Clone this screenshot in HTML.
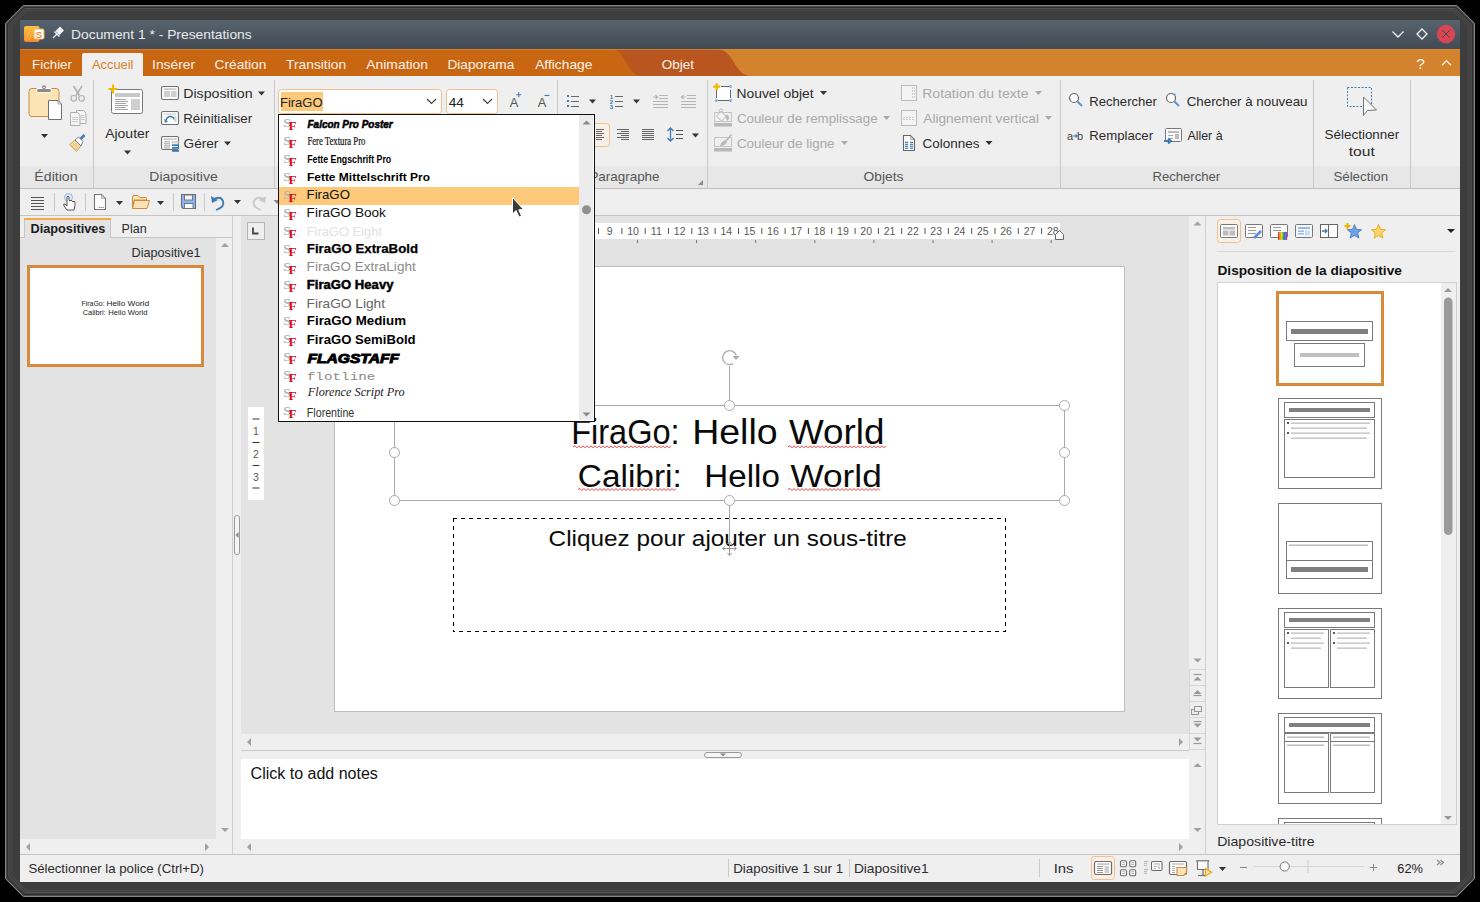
<!DOCTYPE html><html><head><meta charset="utf-8"><title>Presentations</title><style>html,body{margin:0;padding:0;background:#000;width:1480px;height:902px;overflow:hidden}text{white-space:pre}</style></head><body><svg width="1480" height="902" viewBox="0 0 1480 902" style="display:block">
<defs><linearGradient id="ai" x1="0" y1="0" x2="0" y2="1"><stop offset="0" stop-color="#fcc43c"/><stop offset="1" stop-color="#f6892c"/></linearGradient><linearGradient id="tb" x1="0" y1="0" x2="0" y2="1"><stop offset="0" stop-color="#56636e"/><stop offset="1" stop-color="#434b54"/></linearGradient></defs>
<rect x="0" y="0" width="1480" height="902" fill="#000" />
<path d="M23,5 L1457,5 L1475,23 L1475,879 L1457,897 L23,897 L5,879 L5,23 Z" fill="#3d3d3d" />
<path d="M23.5,5.5 L1456.5,5.5 L1474.5,23.5 L1474.5,878.5 L1456.5,896.5 L23.5,896.5 L5.5,878.5 L5.5,23.5 Z" fill="none" stroke="#858585" stroke-width="1" />
<path d="M24.0,6.5 L1456.0,6.5 L1473.5,24.0 L1473.5,878.0 L1456.0,895.5 L24.0,895.5 L6.5,878.0 L6.5,24.0 Z" fill="none" stroke="#4c4c4c" stroke-width="1" />
<path d="M24.5,7.5 L1455.5,7.5 L1472.5,24.5 L1472.5,877.5 L1455.5,894.5 L24.5,894.5 L7.5,877.5 L7.5,24.5 Z" fill="none" stroke="#303030" stroke-width="1" />
<path d="M25,8.5 L1455,8.5 L1471,24.5 L1471,876.5 L1455,892.5 L25,892.5 L9,876.5 L9,24.5 Z" fill="none" stroke="#525252" stroke-width="1" />
<path d="M26.5,10.5 L1453.5,10.5 L1468.5,25.5 L1468.5,875.5 L1453.5,890.5 L26.5,890.5 L11.5,875.5 L11.5,25.5 Z" fill="none" stroke="#454545" stroke-width="2" />
<rect x="20" y="20" width="1440" height="862" fill="#efefef" />
<rect x="20" y="20" width="1440" height="29" fill="url(#tb)" />
<path d="M24,28 Q24,26 26,26 L37.5,26 Q39.5,26 39.5,28 L39.5,40 Q39.5,42 37.5,42 L26,42 Q24,42 24,40 Z" fill="url(#ai)" />
<path d="M26,40 L31,28 M29,40 L34,28" fill="none" stroke="#fdd070" stroke-width="0.8" opacity="0.6"/>
<rect x="34" y="29" width="10" height="10" fill="#fff" stroke="#f8b25a" stroke-width="1" rx="1.5" />
<text x="39" y="37.5" font-family="Liberation Sans" font-size="9.5" fill="#f0862a" font-weight="bold" font-style="normal" text-anchor="middle" >S</text>
<path d="M53,38 L57.5,33.5" fill="none" stroke="#f0f0f0" stroke-width="1.3" />
<path d="M55.5,31 L60,26.5 L64,30.5 L59.5,35 Z" fill="#f0f0f0" />
<path d="M54.5,31.5 L59.5,36.5" fill="none" stroke="#f0f0f0" stroke-width="1.5" />
<text x="71.09" y="39" font-family="Liberation Sans" font-size="13" fill="#e8eaec" font-weight="normal" font-style="normal" text-anchor="start" textLength="180.62" lengthAdjust="spacingAndGlyphs" >Document 1 * - Presentations</text>
<path d="M1392.5,31.5 L1398,37 L1403.5,31.5" fill="none" stroke="#f4f4f4" stroke-width="1.3" />
<path d="M1422,29 L1427,34 L1422,39 L1417,34 Z" fill="none" stroke="#f4f4f4" stroke-width="1.3" />
<circle cx="1446" cy="34" r="9.2" fill="#da4453"/>
<path d="M1442,30 L1450,38 M1450,30 L1442,38" fill="none" stroke="#3b4650" stroke-width="0.9" />
<rect x="20" y="49" width="1440" height="27" fill="#d3822e" />
<path d="M20,49 L611,49 C626,49 626,76 641,76 L20,76 Z" fill="#c96612" />
<path d="M611,49 L717,49 C734,49 734,76 751,76 L641,76 C626,76 626,49 611,49 Z" fill="#b9561f" />
<line x1="20" y1="49.5" x2="1460" y2="49.5" stroke="#db8a36" stroke-width="1" opacity="0.7"/>
<path d="M82,76 L82,55 Q82,53 84,53 L141,53 Q143,53 143,55 L143,76 Z" fill="#efefef" />
<text x="32.14" y="69" font-family="Liberation Sans" font-size="13" fill="#fbf3ea" font-weight="normal" font-style="normal" text-anchor="start" textLength="39.77" lengthAdjust="spacingAndGlyphs" >Fichier</text>
<text x="92.0" y="69" font-family="Liberation Sans" font-size="13" fill="#d8842c" font-weight="normal" font-style="normal" text-anchor="start" textLength="41.48" lengthAdjust="spacingAndGlyphs" >Accueil</text>
<text x="152.06" y="69" font-family="Liberation Sans" font-size="13" fill="#fbf3ea" font-weight="normal" font-style="normal" text-anchor="start" textLength="42.98" lengthAdjust="spacingAndGlyphs" >Insérer</text>
<text x="214.62" y="69" font-family="Liberation Sans" font-size="13" fill="#fbf3ea" font-weight="normal" font-style="normal" text-anchor="start" textLength="51.67" lengthAdjust="spacingAndGlyphs" >Création</text>
<text x="286.12" y="69" font-family="Liberation Sans" font-size="13" fill="#fbf3ea" font-weight="normal" font-style="normal" text-anchor="start" textLength="59.95" lengthAdjust="spacingAndGlyphs" >Transition</text>
<text x="366.3" y="69" font-family="Liberation Sans" font-size="13" fill="#fbf3ea" font-weight="normal" font-style="normal" text-anchor="start" textLength="61.73" lengthAdjust="spacingAndGlyphs" >Animation</text>
<text x="447.4" y="69" font-family="Liberation Sans" font-size="13" fill="#fbf3ea" font-weight="normal" font-style="normal" text-anchor="start" textLength="67.01" lengthAdjust="spacingAndGlyphs" >Diaporama</text>
<text x="535.2" y="69" font-family="Liberation Sans" font-size="13" fill="#fbf3ea" font-weight="normal" font-style="normal" text-anchor="start" textLength="57.17" lengthAdjust="spacingAndGlyphs" >Affichage</text>
<text x="661.79" y="69" font-family="Liberation Sans" font-size="13" fill="#fbf3ea" font-weight="normal" font-style="normal" text-anchor="start" textLength="32.35" lengthAdjust="spacingAndGlyphs" >Objet</text>
<text x="1420.5" y="69" font-family="Liberation Sans" font-size="15.5" fill="#fbf3ea" font-weight="normal" font-style="normal" text-anchor="middle" >?</text>
<path d="M1442,65.3 L1446.5,60.6 L1451,65.3" fill="none" stroke="#fbf3ea" stroke-width="1.3" />
<rect x="20" y="76" width="1440" height="112" fill="#efefef" />
<rect x="20" y="166" width="1440" height="22" fill="#e7e7e7" />
<line x1="20" y1="188.5" x2="1460" y2="188.5" stroke="#bdbdbd" stroke-width="1" />
<line x1="93.5" y1="80" x2="93.5" y2="188" stroke="#c9c9c9" stroke-width="1" />
<line x1="274.5" y1="80" x2="274.5" y2="188" stroke="#c9c9c9" stroke-width="1" />
<line x1="557.5" y1="80" x2="557.5" y2="188" stroke="#c9c9c9" stroke-width="1" />
<line x1="707.5" y1="80" x2="707.5" y2="188" stroke="#c9c9c9" stroke-width="1" />
<line x1="1060.5" y1="80" x2="1060.5" y2="188" stroke="#c9c9c9" stroke-width="1" />
<line x1="1313.5" y1="80" x2="1313.5" y2="188" stroke="#c9c9c9" stroke-width="1" />
<line x1="1410.5" y1="80" x2="1410.5" y2="188" stroke="#c9c9c9" stroke-width="1" />
<text x="34.37" y="180.6" font-family="Liberation Sans" font-size="13" fill="#555555" font-weight="normal" font-style="normal" text-anchor="start" textLength="43.19" lengthAdjust="spacingAndGlyphs" >Édition</text>
<text x="149.28" y="180.6" font-family="Liberation Sans" font-size="13" fill="#555555" font-weight="normal" font-style="normal" text-anchor="start" textLength="68.50" lengthAdjust="spacingAndGlyphs" >Diapositive</text>
<text x="589.43" y="180.5" font-family="Liberation Sans" font-size="13" fill="#555555" font-weight="normal" font-style="normal" text-anchor="start" textLength="70.13" lengthAdjust="spacingAndGlyphs" >Paragraphe</text>
<text x="863.58" y="180.6" font-family="Liberation Sans" font-size="13" fill="#555555" font-weight="normal" font-style="normal" text-anchor="start" textLength="39.91" lengthAdjust="spacingAndGlyphs" >Objets</text>
<text x="1152.45" y="180.6" font-family="Liberation Sans" font-size="13" fill="#555555" font-weight="normal" font-style="normal" text-anchor="start" textLength="67.80" lengthAdjust="spacingAndGlyphs" >Rechercher</text>
<text x="1333.4" y="180.6" font-family="Liberation Sans" font-size="13" fill="#555555" font-weight="normal" font-style="normal" text-anchor="start" textLength="54.75" lengthAdjust="spacingAndGlyphs" >Sélection</text>
<path d="M703,180 L703,185 L698,185 Z" fill="#888" />
<path d="M32,88.5 L56,88.5 Q59,88.5 59,91.5 L59,113.5 Q59,116.5 56,116.5 L32,116.5 Q29,116.5 29,113.5 L29,91.5 Q29,88.5 32,88.5 Z" fill="#fde4b6" stroke="#cf8a45" stroke-width="1" />
<rect x="36" y="88" width="16" height="4.5" fill="#fff" rx="2" />
<rect x="37" y="89" width="14" height="3" fill="#8a8a8a" rx="1.5" />
<circle cx="44" cy="87.3" r="2" fill="#8a8a8a"/>
<circle cx="44" cy="87.5" r="0.8" fill="#fff"/>
<path d="M48.5,100.5 L58,100.5 L61.5,104 L61.5,119.5 L48.5,119.5 Z" fill="#fff" stroke="#707070" stroke-width="1" />
<path d="M58,100.5 L58,104 L61.5,104" fill="none" stroke="#909090" stroke-width="0.8" />
<path d="M41.0,134.0 L48.0,134.0 L44.5,138.0 Z" fill="#333" />
<path d="M73.5,86 L79.5,95.5 M82,86 L76,95.5" fill="none" stroke="#b0b0b0" stroke-width="1.6" />
<circle cx="73.8" cy="98.3" r="2.8" fill="none" stroke="#b0b0b0" stroke-width="1.2"/>
<circle cx="81.6" cy="98.3" r="2.8" fill="none" stroke="#b0b0b0" stroke-width="1.2"/>
<path d="M76.5,110.5 L83.5,110.5 L86,113 L86,123.5 L76.5,123.5 Z" fill="#f4f4f4" stroke="#b0b0b0" stroke-width="1" />
<path d="M70.5,112.5 L77.5,112.5 L80,115 L80,125.5 L70.5,125.5 Z" fill="#f4f4f4" stroke="#b0b0b0" stroke-width="1" />
<line x1="72" y1="117.5" x2="78" y2="117.5" stroke="#c0c0c0" stroke-width="0.8" />
<line x1="81" y1="115.5" x2="84.5" y2="115.5" stroke="#c0c0c0" stroke-width="0.8" />
<line x1="72" y1="119.5" x2="78" y2="119.5" stroke="#c0c0c0" stroke-width="0.8" />
<line x1="81" y1="117.5" x2="84.5" y2="117.5" stroke="#c0c0c0" stroke-width="0.8" />
<line x1="72" y1="121.5" x2="78" y2="121.5" stroke="#c0c0c0" stroke-width="0.8" />
<line x1="81" y1="119.5" x2="84.5" y2="119.5" stroke="#c0c0c0" stroke-width="0.8" />
<path d="M69.5,144.5 L76.5,151.5 L81,146 L75,140 Z" fill="#f6d89c" stroke="#c99a55" stroke-width="0.8" />
<path d="M71.5,146 L77,150 M73,143.5 L78.5,148" fill="none" stroke="#d8b070" stroke-width="0.6" />
<path d="M75,140 L78.5,137 L83,141.5 L81,146 Z" fill="#fff" stroke="#666" stroke-width="0.8" />
<path d="M80.5,139 L84.5,135" fill="none" stroke="#3d7cb5" stroke-width="2.6" />
<path d="M111.5,91.5 Q111.5,89.5 113.5,89.5 L140.5,89.5 Q142.5,89.5 142.5,91.5 L142.5,111.5 Q142.5,113.5 140.5,113.5 L113.5,113.5 Q111.5,113.5 111.5,111.5 Z" fill="#fff" stroke="#777" stroke-width="1" />
<rect x="115" y="93" width="25" height="4" fill="#c8c8c8" />
<line x1="115" y1="99.5" x2="126" y2="99.5" stroke="#999" stroke-width="0.9" />
<line x1="115" y1="101.5" x2="128" y2="101.5" stroke="#999" stroke-width="0.9" />
<line x1="115" y1="103.5" x2="126" y2="103.5" stroke="#999" stroke-width="0.9" />
<line x1="115" y1="105.5" x2="128" y2="105.5" stroke="#999" stroke-width="0.9" />
<line x1="115" y1="107.5" x2="126" y2="107.5" stroke="#999" stroke-width="0.9" />
<line x1="115" y1="109.5" x2="128" y2="109.5" stroke="#999" stroke-width="0.9" />
<rect x="131" y="99" width="9" height="11" fill="#cfcfcf" />
<path d="M113,84.5 L113,93.5 M108.5,89 L117.5,89" fill="none" stroke="#f5b800" stroke-width="2" />
<text x="105.2" y="138.4" font-family="Liberation Sans" font-size="13" fill="#2b2b2b" font-weight="normal" font-style="normal" text-anchor="start" textLength="44.26" lengthAdjust="spacingAndGlyphs" >Ajouter</text>
<path d="M124.0,150.5 L131.0,150.5 L127.5,154.5 Z" fill="#333" />
<rect x="161.5" y="86.5" width="17" height="13" fill="#fafafa" stroke="#707070" stroke-width="1.1" rx="1.5" />
<rect x="161.5" y="111.5" width="17" height="13" fill="#fafafa" stroke="#707070" stroke-width="1.1" rx="1.5" />
<rect x="161.5" y="136.5" width="17" height="13" fill="#fafafa" stroke="#707070" stroke-width="1.1" rx="1.5" />
<rect x="164" y="88.3" width="12.5" height="1.6" fill="#c8c8c8" />
<rect x="164" y="91" width="6" height="6" fill="#cfcfcf" />
<rect x="171" y="91" width="5.5" height="6" fill="#cfcfcf" />
<rect x="164" y="113.3" width="12.5" height="1.6" fill="#dcdcdc" />
<rect x="174" y="116" width="2.5" height="6" fill="#dcdcdc" />
<line x1="164" y1="122" x2="167" y2="122" stroke="#c8c8c8" stroke-width="0.8" />
<path d="M166.2,120.2 Q167,116.5 170.5,116.5 Q173.5,116.5 174,119.5" fill="none" stroke="#3d7cb5" stroke-width="1.3" />
<path d="M164.2,118.8 L168.2,121.6 L165,122.6 Z" fill="#3d7cb5" />
<rect x="164" y="138.3" width="12.5" height="1.6" fill="#c8c8c8" />
<line x1="164" y1="141.8" x2="170" y2="141.8" stroke="#999" stroke-width="0.9" />
<line x1="164" y1="143.8" x2="170" y2="143.8" stroke="#999" stroke-width="0.9" />
<line x1="164" y1="145.8" x2="170" y2="145.8" stroke="#999" stroke-width="0.9" />
<line x1="164" y1="147.8" x2="170" y2="147.8" stroke="#999" stroke-width="0.9" />
<rect x="172" y="144.3" width="7" height="1.8" fill="#3d7cb5" />
<rect x="172" y="147" width="7" height="1.8" fill="#3d7cb5" />
<rect x="172" y="150" width="7" height="1.8" fill="#3d7cb5" />
<rect x="171.5" y="141" width="7" height="2.5" fill="#d6d6d6" />
<text x="183.17" y="98.3" font-family="Liberation Sans" font-size="13" fill="#2b2b2b" font-weight="normal" font-style="normal" text-anchor="start" textLength="69.37" lengthAdjust="spacingAndGlyphs" >Disposition</text>
<path d="M258.0,91.5 L265.0,91.5 L261.5,95.5 Z" fill="#333" />
<text x="183.23" y="123" font-family="Liberation Sans" font-size="13" fill="#2b2b2b" font-weight="normal" font-style="normal" text-anchor="start" textLength="69.02" lengthAdjust="spacingAndGlyphs" >Réinitialiser</text>
<text x="183.62" y="148" font-family="Liberation Sans" font-size="13" fill="#2b2b2b" font-weight="normal" font-style="normal" text-anchor="start" textLength="34.80" lengthAdjust="spacingAndGlyphs" >Gérer</text>
<path d="M224.0,141.5 L231.0,141.5 L227.5,145.5 Z" fill="#333" />
<rect x="278.5" y="89.5" width="163" height="24" fill="#fff" stroke="#f2c08c" stroke-width="1" rx="3" />
<rect x="281" y="92" width="42" height="19" fill="#fdc97a" />
<text x="279.96" y="107" font-family="Liberation Sans" font-size="13" fill="#222" font-weight="normal" font-style="normal" text-anchor="start" textLength="42.66" lengthAdjust="spacingAndGlyphs" >FiraGO</text>
<path d="M427,99 L431.5,103.5 L436,99" fill="none" stroke="#444" stroke-width="1.2" />
<rect x="446.5" y="89.5" width="51" height="24" fill="#fff" stroke="#f2c08c" stroke-width="1" rx="3" />
<text x="448.73" y="107" font-family="Liberation Sans" font-size="13" fill="#222" font-weight="normal" font-style="normal" text-anchor="start" textLength="15.14" lengthAdjust="spacingAndGlyphs" >44</text>
<path d="M483,99 L487.5,103.5 L492,99" fill="none" stroke="#444" stroke-width="1.2" />
<text x="514" y="106.6" font-family="Liberation Sans" font-size="12.8" fill="#555" font-weight="normal" font-style="normal" text-anchor="middle" >A</text>
<path d="M518.7,92.2 L518.7,97.2 M516.2,94.7 L521.2,94.7" fill="none" stroke="#3d7cb5" stroke-width="1.1" />
<text x="542" y="106.6" font-family="Liberation Sans" font-size="12.8" fill="#555" font-weight="normal" font-style="normal" text-anchor="middle" >A</text>
<line x1="544.5" y1="95.5" x2="549.5" y2="95.5" stroke="#3d7cb5" stroke-width="1.1" />
<rect x="567" y="95" width="2" height="2" fill="#3d7cb5" />
<line x1="571" y1="96.5" x2="579" y2="96.5" stroke="#666" stroke-width="1" />
<rect x="567" y="100" width="2" height="2" fill="#3d7cb5" />
<line x1="571" y1="101.5" x2="579" y2="101.5" stroke="#666" stroke-width="1" />
<rect x="567" y="105" width="2" height="2" fill="#3d7cb5" />
<line x1="571" y1="106.5" x2="579" y2="106.5" stroke="#666" stroke-width="1" />
<path d="M589.0,99.5 L596.0,99.5 L592.5,103.5 Z" fill="#333" />
<text x="611.5" y="98.5" font-family="Liberation Sans" font-size="6" fill="#3d7cb5" font-weight="bold" font-style="normal" text-anchor="middle" >1</text>
<line x1="615" y1="96.5" x2="623" y2="96.5" stroke="#666" stroke-width="1" />
<text x="611.5" y="103.5" font-family="Liberation Sans" font-size="6" fill="#3d7cb5" font-weight="bold" font-style="normal" text-anchor="middle" >2</text>
<line x1="615" y1="101.5" x2="623" y2="101.5" stroke="#666" stroke-width="1" />
<text x="611.5" y="108.5" font-family="Liberation Sans" font-size="6" fill="#3d7cb5" font-weight="bold" font-style="normal" text-anchor="middle" >3</text>
<line x1="615" y1="106.5" x2="623" y2="106.5" stroke="#666" stroke-width="1" />
<path d="M633.0,99.5 L640.0,99.5 L636.5,103.5 Z" fill="#333" />
<line x1="659" y1="95.5" x2="668" y2="95.5" stroke="#b5b5b5" stroke-width="1" />
<line x1="659" y1="98.5" x2="668" y2="98.5" stroke="#b5b5b5" stroke-width="1" />
<line x1="653" y1="101.5" x2="668" y2="101.5" stroke="#b5b5b5" stroke-width="1" />
<line x1="653" y1="104.5" x2="668" y2="104.5" stroke="#b5b5b5" stroke-width="1" />
<line x1="653" y1="107.5" x2="668" y2="107.5" stroke="#b5b5b5" stroke-width="1" />
<path d="M653,97 L657,97 M655.5,95 L657.5,97 L655.5,99" fill="none" stroke="#b5b5b5" stroke-width="1.2" />
<line x1="687" y1="95.5" x2="696" y2="95.5" stroke="#b5b5b5" stroke-width="1" />
<line x1="687" y1="98.5" x2="696" y2="98.5" stroke="#b5b5b5" stroke-width="1" />
<line x1="681" y1="101.5" x2="696" y2="101.5" stroke="#b5b5b5" stroke-width="1" />
<line x1="681" y1="104.5" x2="696" y2="104.5" stroke="#b5b5b5" stroke-width="1" />
<line x1="681" y1="107.5" x2="696" y2="107.5" stroke="#b5b5b5" stroke-width="1" />
<path d="M685.5,97 L681.5,97 M683.5,95 L681.5,97 L683.5,99" fill="none" stroke="#b5b5b5" stroke-width="1.2" />
<rect x="590.5" y="123.5" width="19" height="23" fill="#f8efe6" stroke="#f2c08c" stroke-width="1" rx="3" />
<line x1="596" y1="129.5" x2="604" y2="129.5" stroke="#666" stroke-width="1" />
<line x1="617" y1="129.5" x2="629" y2="129.5" stroke="#666" stroke-width="1" />
<line x1="642" y1="129.5" x2="654" y2="129.5" stroke="#666" stroke-width="1" />
<line x1="596" y1="131.5" x2="602" y2="131.5" stroke="#666" stroke-width="1" />
<line x1="621" y1="131.5" x2="629" y2="131.5" stroke="#666" stroke-width="1" />
<line x1="642" y1="131.5" x2="654" y2="131.5" stroke="#666" stroke-width="1" />
<line x1="596" y1="133.5" x2="604" y2="133.5" stroke="#666" stroke-width="1" />
<line x1="617" y1="133.5" x2="629" y2="133.5" stroke="#666" stroke-width="1" />
<line x1="642" y1="133.5" x2="654" y2="133.5" stroke="#666" stroke-width="1" />
<line x1="596" y1="135.5" x2="602" y2="135.5" stroke="#666" stroke-width="1" />
<line x1="621" y1="135.5" x2="629" y2="135.5" stroke="#666" stroke-width="1" />
<line x1="642" y1="135.5" x2="654" y2="135.5" stroke="#666" stroke-width="1" />
<line x1="596" y1="137.5" x2="604" y2="137.5" stroke="#666" stroke-width="1" />
<line x1="617" y1="137.5" x2="629" y2="137.5" stroke="#666" stroke-width="1" />
<line x1="642" y1="137.5" x2="654" y2="137.5" stroke="#666" stroke-width="1" />
<line x1="596" y1="139.5" x2="602" y2="139.5" stroke="#666" stroke-width="1" />
<line x1="621" y1="139.5" x2="629" y2="139.5" stroke="#666" stroke-width="1" />
<line x1="642" y1="139.5" x2="654" y2="139.5" stroke="#666" stroke-width="1" />
<path d="M670.5,128 L670.5,141" fill="none" stroke="#3d7cb5" stroke-width="1.3" />
<path d="M667.5,131 L670.5,128 L673.5,131 M667.5,138 L670.5,141 L673.5,138" fill="none" stroke="#3d7cb5" stroke-width="1.3" />
<line x1="676" y1="130.5" x2="683" y2="130.5" stroke="#555" stroke-width="1" />
<line x1="676" y1="134.5" x2="683" y2="134.5" stroke="#555" stroke-width="1" />
<line x1="676" y1="138.5" x2="683" y2="138.5" stroke="#555" stroke-width="1" />
<path d="M692.0,133.5 L699.0,133.5 L695.5,137.5 Z" fill="#333" />
<rect x="716" y="86" width="14.5" height="14.5" fill="#fff" />
<path d="M721,86.5 L729,86.5 M730.5,90 L730.5,98 M729,100.5 L718,100.5 M716.5,98 L716.5,90" fill="none" stroke="#666" stroke-width="1" />
<rect x="729.3" y="85.3" width="2.4" height="2.4" fill="#6b9cf0" />
<rect x="715.3" y="99.3" width="2.4" height="2.4" fill="#6b9cf0" />
<rect x="729.3" y="99.3" width="2.4" height="2.4" fill="#6b9cf0" />
<path d="M716.7,83.2 L716.7,90.2 M713.2,86.7 L720.2,86.7" fill="none" stroke="#f5b800" stroke-width="2.2" />
<text x="736.49" y="97.6" font-family="Liberation Sans" font-size="13" fill="#2b2b2b" font-weight="normal" font-style="normal" text-anchor="start" textLength="77.14" lengthAdjust="spacingAndGlyphs" >Nouvel objet</text>
<path d="M820.0,91.0 L827.0,91.0 L823.5,95.0 Z" fill="#333" />
<rect x="714.5" y="112.5" width="17" height="9" fill="none" stroke="#c4c4c4" stroke-width="1" />
<path d="M716.5,116 L721,111.5 L726,116.5 L721.5,121 Z" fill="#f4f4f4" stroke="#b8b8b8" stroke-width="1" />
<circle cx="721" cy="110.5" r="1.6" fill="none" stroke="#b8b8b8" stroke-width="0.9"/>
<path d="M725,115 Q729,114 729,119 L727,121 Z" fill="#b8b8b8" />
<rect x="714" y="123" width="18" height="3.5" fill="#b8b8b8" />
<text x="736.93" y="122.5" font-family="Liberation Sans" font-size="13" fill="#a9a9a9" font-weight="normal" font-style="normal" text-anchor="start" textLength="140.62" lengthAdjust="spacingAndGlyphs" >Couleur de remplissage</text>
<path d="M883.0,116.0 L890.0,116.0 L886.5,120.0 Z" fill="#aaa" />
<rect x="714.5" y="137.5" width="17" height="9" fill="none" stroke="#c4c4c4" stroke-width="1" />
<path d="M720,146 Q721,142 725,140 L727,142 Q725,146 720,146 Z" fill="#b8b8b8" />
<path d="M726,141 L731.5,134.5" fill="none" stroke="#b8b8b8" stroke-width="1.6" />
<rect x="714" y="148" width="18" height="3.5" fill="#b8b8b8" />
<text x="736.93" y="147.5" font-family="Liberation Sans" font-size="13" fill="#a9a9a9" font-weight="normal" font-style="normal" text-anchor="start" textLength="97.65" lengthAdjust="spacingAndGlyphs" >Couleur de ligne</text>
<path d="M841.0,141.0 L848.0,141.0 L844.5,145.0 Z" fill="#aaa" />
<rect x="901.5" y="85.5" width="15" height="15" fill="#f4f4f4" stroke="#bbb" stroke-width="1" />
<line x1="912.5" y1="87" x2="912.5" y2="99" stroke="#ccc" stroke-width="1" stroke-dasharray="2,1"/>
<line x1="914.5" y1="87" x2="914.5" y2="99" stroke="#ccc" stroke-width="1" stroke-dasharray="2,1"/>
<text x="922.18" y="97.6" font-family="Liberation Sans" font-size="13" fill="#a9a9a9" font-weight="normal" font-style="normal" text-anchor="start" textLength="106.30" lengthAdjust="spacingAndGlyphs" >Rotation du texte</text>
<path d="M1035.0,91.0 L1042.0,91.0 L1038.5,95.0 Z" fill="#aaa" />
<rect x="901.5" y="110.5" width="15" height="15" fill="#f4f4f4" stroke="#bbb" stroke-width="1" />
<line x1="903" y1="117.5" x2="915" y2="117.5" stroke="#ccc" stroke-width="1" stroke-dasharray="2,1"/>
<line x1="903" y1="119.5" x2="915" y2="119.5" stroke="#ccc" stroke-width="1" stroke-dasharray="2,1"/>
<text x="923.3" y="122.5" font-family="Liberation Sans" font-size="13" fill="#a9a9a9" font-weight="normal" font-style="normal" text-anchor="start" textLength="115.64" lengthAdjust="spacingAndGlyphs" >Alignement vertical</text>
<path d="M1045.0,116.0 L1052.0,116.0 L1048.5,120.0 Z" fill="#aaa" />
<path d="M903.5,135.5 L910.5,135.5 L914.5,139.5 L914.5,150.5 L903.5,150.5 Z" fill="#fff" stroke="#666" stroke-width="1.1" />
<path d="M910.5,136 L910.5,139.5 L914,139.5 Z" fill="#ddd" stroke="#888" stroke-width="0.6" />
<rect x="905" y="141.7" width="3.2" height="1.2" fill="#3d7cb5" />
<rect x="910" y="141.7" width="3.2" height="1.2" fill="#3d7cb5" />
<rect x="905" y="143.7" width="3.2" height="1.2" fill="#3d7cb5" />
<rect x="910" y="143.7" width="3.2" height="1.2" fill="#3d7cb5" />
<rect x="905" y="145.7" width="3.2" height="1.2" fill="#3d7cb5" />
<rect x="910" y="145.7" width="3.2" height="1.2" fill="#3d7cb5" />
<rect x="905" y="147.7" width="3.2" height="1.2" fill="#3d7cb5" />
<rect x="910" y="147.7" width="3.2" height="1.2" fill="#3d7cb5" />
<text x="922.63" y="147.5" font-family="Liberation Sans" font-size="13" fill="#2b2b2b" font-weight="normal" font-style="normal" text-anchor="start" textLength="56.85" lengthAdjust="spacingAndGlyphs" >Colonnes</text>
<path d="M985.5,141.0 L992.5,141.0 L989,145.0 Z" fill="#333" />
<circle cx="1074" cy="98" r="4.5" fill="#fff" stroke="#666" stroke-width="1.2"/>
<path d="M1077.5,101.5 L1082,106" fill="none" stroke="#5b8ee0" stroke-width="2" />
<circle cx="1171" cy="98" r="4.5" fill="#fff" stroke="#666" stroke-width="1.2"/>
<path d="M1174.5,101.5 L1179,106" fill="none" stroke="#5b8ee0" stroke-width="2" />
<path d="M1173,93.5 L1176,94 L1174.5,96.5 Z" fill="#5b8ee0" />
<text x="1089.35" y="105.8" font-family="Liberation Sans" font-size="13" fill="#2b2b2b" font-weight="normal" font-style="normal" text-anchor="start" textLength="67.60" lengthAdjust="spacingAndGlyphs" >Rechercher</text>
<text x="1186.73" y="105.8" font-family="Liberation Sans" font-size="13" fill="#2b2b2b" font-weight="normal" font-style="normal" text-anchor="start" textLength="120.76" lengthAdjust="spacingAndGlyphs" >Chercher à nouveau</text>
<text x="1067" y="140" font-family="Liberation Sans" font-size="11" fill="#444" font-weight="normal" font-style="normal" text-anchor="start" >a</text>
<text x="1077" y="140" font-family="Liberation Sans" font-size="11" fill="#444" font-weight="normal" font-style="normal" text-anchor="start" >b</text>
<path d="M1073,136 L1077,136 M1075.5,134.5 L1077,136 L1075.5,137.5" fill="none" stroke="#3d7cb5" stroke-width="1.2" />
<text x="1089.35" y="140" font-family="Liberation Sans" font-size="13" fill="#2b2b2b" font-weight="normal" font-style="normal" text-anchor="start" textLength="63.72" lengthAdjust="spacingAndGlyphs" >Remplacer</text>
<rect x="1165.5" y="128.5" width="16" height="13" fill="#fafafa" stroke="#777" stroke-width="1" rx="1" />
<rect x="1168" y="131" width="11" height="2" fill="#bbb" />
<rect x="1175" y="134" width="4" height="5" fill="#bbb" />
<line x1="1168" y1="135.5" x2="1173" y2="135.5" stroke="#aaa" stroke-width="1" />
<line x1="1168" y1="138.5" x2="1173" y2="138.5" stroke="#aaa" stroke-width="1" />
<path d="M1164,141 L1170,141 M1168,138.5 L1171,141 L1168,143.5" fill="none" stroke="#3d7cb5" stroke-width="2" />
<text x="1187.4" y="140" font-family="Liberation Sans" font-size="13" fill="#2b2b2b" font-weight="normal" font-style="normal" text-anchor="start" textLength="35.20" lengthAdjust="spacingAndGlyphs" >Aller à</text>
<rect x="1347.5" y="87.5" width="24" height="19" fill="none" stroke="#3d7cb5" stroke-width="1" stroke-dasharray="2,1.5"/>
<path d="M1363.5,97 L1363.5,115.5 L1367.5,110.5 L1376.5,110 Z" fill="#f8f8f8" stroke="#777" stroke-width="1" />
<text x="1324.6" y="138.7" font-family="Liberation Sans" font-size="13" fill="#2b2b2b" font-weight="normal" font-style="normal" text-anchor="start" textLength="74.66" lengthAdjust="spacingAndGlyphs" >Sélectionner</text>
<text x="1348.77" y="156.4" font-family="Liberation Sans" font-size="13" fill="#2b2b2b" font-weight="normal" font-style="normal" text-anchor="start" textLength="26.06" lengthAdjust="spacingAndGlyphs" >tout</text>
<rect x="20" y="189" width="1440" height="26" fill="#efefef" />
<line x1="20" y1="215.5" x2="1460" y2="215.5" stroke="#c4c4c4" stroke-width="1" />
<line x1="31" y1="197.5" x2="44" y2="197.5" stroke="#555" stroke-width="1" />
<line x1="31" y1="200.5" x2="44" y2="200.5" stroke="#555" stroke-width="1" />
<line x1="31" y1="203.5" x2="44" y2="203.5" stroke="#555" stroke-width="1" />
<line x1="31" y1="206.5" x2="44" y2="206.5" stroke="#555" stroke-width="1" />
<line x1="31" y1="209.5" x2="44" y2="209.5" stroke="#555" stroke-width="1" />
<line x1="54.5" y1="193" x2="54.5" y2="211" stroke="#c9c9c9" stroke-width="1" />
<line x1="85.5" y1="193" x2="85.5" y2="211" stroke="#c9c9c9" stroke-width="1" />
<line x1="173.5" y1="193" x2="173.5" y2="211" stroke="#c9c9c9" stroke-width="1" />
<line x1="204.5" y1="193" x2="204.5" y2="211" stroke="#c9c9c9" stroke-width="1" />
<circle cx="68.5" cy="197.5" r="4" fill="#dbe7f7" stroke="#9ab8e8" stroke-width="1"/>
<path d="M67,197 L67,206 L65,204 Q63,203 64,206 L67,210 L74,210 L75,205 L75,202 Q74,200 73,202 L72,201 Q71,199 70,201 L69,200 L69,197 Q68,195 67,197 Z" fill="#fff" stroke="#444" stroke-width="0.9" />
<path d="M94.5,194.5 L101.5,194.5 L105.5,198.5 L105.5,209.5 L94.5,209.5 Z" fill="#fff" stroke="#777" stroke-width="1.1" />
<path d="M101.5,195 L101.5,198.5 L105,198.5 Z" fill="#ddd" stroke="#999" stroke-width="0.6" />
<rect x="98.7" y="207" width="1" height="1" fill="#666" />
<rect x="100.7" y="207" width="1" height="1" fill="#666" />
<rect x="102.7" y="207" width="1" height="1" fill="#666" />
<path d="M116.0,201.0 L123.0,201.0 L119.5,205.0 Z" fill="#333" />
<path d="M132.5,197 Q132.5,195.5 134,195.5 L138,195.5 L140,197.5 L146,197.5 Q146.5,197.5 146.5,198.5 L146.5,200 L134,200 L132.5,208.5 Z" fill="#fde4b6" stroke="#d08a40" stroke-width="1" />
<path d="M134.5,200.5 L149.5,200.5 L147,208.5 L132.5,208.5 Z" fill="#fde4b6" stroke="#d08a40" stroke-width="1" />
<path d="M157.0,201.0 L164.0,201.0 L160.5,205.0 Z" fill="#333" />
<path d="M181.5,194.5 L195.5,194.5 L195.5,208.5 L183,208.5 L181.5,207 Z" fill="#8ab4f8" stroke="#6f6f6f" stroke-width="1.1" />
<rect x="184.5" y="195" width="8" height="5" fill="#f2f6fc" stroke="#6f6f6f" stroke-width="0.9" />
<rect x="184.5" y="203.5" width="8.5" height="5" fill="#fff" stroke="#6f6f6f" stroke-width="0.9" />
<path d="M213,200 Q220,195 223,201 Q225,207 216,210" fill="none" stroke="#3d7cb5" stroke-width="1.8" />
<path d="M211,196 L212,203 L218,200 Z" fill="#3d7cb5" />
<path d="M234.0,200.0 L241.0,200.0 L237.5,204.0 Z" fill="#333" />
<path d="M264,200 Q257,195 254,201 Q252,207 261,210" fill="none" stroke="#c8c8c8" stroke-width="1.8" />
<path d="M266,196 L265,203 L259,200 Z" fill="#c8c8c8" />
<path d="M273.5,200.0 L280.5,200.0 L277,204.0 Z" fill="#888" />
<rect x="20" y="216" width="213" height="639" fill="#efefef" />
<rect x="20" y="238" width="196" height="601" fill="#e3e3e3" />
<rect x="24" y="218" width="87" height="21" fill="#e3e3e3" />
<line x1="24.5" y1="219" x2="24.5" y2="238" stroke="#c4c4c4" stroke-width="1" />
<line x1="110.5" y1="219" x2="110.5" y2="238" stroke="#c4c4c4" stroke-width="1" />
<rect x="24" y="218" width="87" height="2" fill="#f5a940" />
<line x1="20" y1="237.5" x2="24" y2="237.5" stroke="#c4c4c4" stroke-width="1" />
<line x1="111" y1="237.5" x2="232" y2="237.5" stroke="#c4c4c4" stroke-width="1" />
<text x="30.47" y="232.8" font-family="Liberation Sans" font-size="13" fill="#1a1a1a" font-weight="bold" font-style="normal" text-anchor="start" textLength="74.95" lengthAdjust="spacingAndGlyphs" >Diapositives</text>
<text x="121.6" y="232.8" font-family="Liberation Sans" font-size="13" fill="#2b2b2b" font-weight="normal" font-style="normal" text-anchor="start" textLength="25.14" lengthAdjust="spacingAndGlyphs" >Plan</text>
<rect x="216" y="239" width="16" height="600" fill="#efefef" />
<path d="M221.0,247.0 L229.0,247.0 L225,243.0 Z" fill="#a0a0a0" />
<path d="M221.0,828.0 L229.0,828.0 L225,832.0 Z" fill="#a0a0a0" />
<line x1="232.5" y1="216" x2="232.5" y2="855" stroke="#d0d0d0" stroke-width="1" />
<rect x="20" y="839" width="212" height="16" fill="#efefef" />
<path d="M30.0,843.0 L30.0,851.0 L26.0,847 Z" fill="#a0a0a0" />
<path d="M205.0,843.0 L205.0,851.0 L209.0,847 Z" fill="#a0a0a0" />
<text x="131.59" y="257" font-family="Liberation Sans" font-size="13" fill="#2b2b2b" font-weight="normal" font-style="normal" text-anchor="start" textLength="68.91" lengthAdjust="spacingAndGlyphs" >Diapositive1</text>
<rect x="28.5" y="266.5" width="174" height="99" fill="#fff" stroke="#d8893a" stroke-width="3" />
<text x="81.44" y="305.5" font-family="Liberation Sans" font-size="7.5" fill="#1a1a1a" font-weight="normal" font-style="normal" text-anchor="start" textLength="23.21" lengthAdjust="spacingAndGlyphs" >FiraGo:</text>
<text x="106.44" y="305.5" font-family="Liberation Sans" font-size="7.5" fill="#1a1a1a" font-weight="normal" font-style="normal" text-anchor="start" textLength="42.60" lengthAdjust="spacingAndGlyphs" >Hello World</text>
<text x="82.73" y="314.6" font-family="Liberation Sans" font-size="7.2" fill="#1a1a1a" font-weight="normal" font-style="normal" text-anchor="start" textLength="22.95" lengthAdjust="spacingAndGlyphs" >Calibri:</text>
<text x="108.29" y="314.6" font-family="Liberation Sans" font-size="7.2" fill="#1a1a1a" font-weight="normal" font-style="normal" text-anchor="start" textLength="39.20" lengthAdjust="spacingAndGlyphs" >Hello World</text>
<rect x="233" y="216" width="8" height="639" fill="#efefef" />
<rect x="234.5" y="515.5" width="5" height="39" fill="#f5f5f5" stroke="#999" stroke-width="1" rx="2.5" />
<path d="M238.5,532.0 L238.5,538.0 L235.5,535 Z" fill="#888" />
<rect x="241" y="216" width="948" height="518" fill="#e3e3e3" />
<rect x="247.5" y="222.5" width="17" height="17" fill="#efefef" stroke="#b5b5b5" stroke-width="1" />
<path d="M253,227.5 L253,233.5 L258.5,233.5" fill="none" stroke="#444" stroke-width="1.8" />
<rect x="395" y="223" width="665" height="16" fill="#fff" />
<text x="423.1" y="235" font-family="Liberation Sans" font-size="10.5" fill="#5a5a5a" font-weight="normal" font-style="normal" text-anchor="middle" >1</text>
<line x1="412.0" y1="228" x2="412.0" y2="234" stroke="#555" stroke-width="1" />
<text x="446.5" y="235" font-family="Liberation Sans" font-size="10.5" fill="#5a5a5a" font-weight="normal" font-style="normal" text-anchor="middle" >2</text>
<line x1="435.3" y1="228" x2="435.3" y2="234" stroke="#555" stroke-width="1" />
<text x="469.8" y="235" font-family="Liberation Sans" font-size="10.5" fill="#5a5a5a" font-weight="normal" font-style="normal" text-anchor="middle" >3</text>
<line x1="458.6" y1="228" x2="458.6" y2="234" stroke="#555" stroke-width="1" />
<text x="493.1" y="235" font-family="Liberation Sans" font-size="10.5" fill="#5a5a5a" font-weight="normal" font-style="normal" text-anchor="middle" >4</text>
<line x1="481.9" y1="228" x2="481.9" y2="234" stroke="#555" stroke-width="1" />
<text x="516.4" y="235" font-family="Liberation Sans" font-size="10.5" fill="#5a5a5a" font-weight="normal" font-style="normal" text-anchor="middle" >5</text>
<line x1="505.3" y1="228" x2="505.3" y2="234" stroke="#555" stroke-width="1" />
<text x="539.7" y="235" font-family="Liberation Sans" font-size="10.5" fill="#5a5a5a" font-weight="normal" font-style="normal" text-anchor="middle" >6</text>
<line x1="528.6" y1="228" x2="528.6" y2="234" stroke="#555" stroke-width="1" />
<text x="563.1" y="235" font-family="Liberation Sans" font-size="10.5" fill="#5a5a5a" font-weight="normal" font-style="normal" text-anchor="middle" >7</text>
<line x1="551.9" y1="228" x2="551.9" y2="234" stroke="#555" stroke-width="1" />
<text x="586.4" y="235" font-family="Liberation Sans" font-size="10.5" fill="#5a5a5a" font-weight="normal" font-style="normal" text-anchor="middle" >8</text>
<line x1="575.2" y1="228" x2="575.2" y2="234" stroke="#555" stroke-width="1" />
<text x="609.7" y="235" font-family="Liberation Sans" font-size="10.5" fill="#5a5a5a" font-weight="normal" font-style="normal" text-anchor="middle" >9</text>
<line x1="598.5" y1="228" x2="598.5" y2="234" stroke="#555" stroke-width="1" />
<text x="633.0" y="235" font-family="Liberation Sans" font-size="10.5" fill="#5a5a5a" font-weight="normal" font-style="normal" text-anchor="middle" >10</text>
<line x1="621.9" y1="228" x2="621.9" y2="234" stroke="#555" stroke-width="1" />
<text x="656.3" y="235" font-family="Liberation Sans" font-size="10.5" fill="#5a5a5a" font-weight="normal" font-style="normal" text-anchor="middle" >11</text>
<line x1="645.2" y1="228" x2="645.2" y2="234" stroke="#555" stroke-width="1" />
<text x="679.7" y="235" font-family="Liberation Sans" font-size="10.5" fill="#5a5a5a" font-weight="normal" font-style="normal" text-anchor="middle" >12</text>
<line x1="668.5" y1="228" x2="668.5" y2="234" stroke="#555" stroke-width="1" />
<text x="703.0" y="235" font-family="Liberation Sans" font-size="10.5" fill="#5a5a5a" font-weight="normal" font-style="normal" text-anchor="middle" >13</text>
<line x1="691.8" y1="228" x2="691.8" y2="234" stroke="#555" stroke-width="1" />
<text x="726.3" y="235" font-family="Liberation Sans" font-size="10.5" fill="#5a5a5a" font-weight="normal" font-style="normal" text-anchor="middle" >14</text>
<line x1="715.1" y1="228" x2="715.1" y2="234" stroke="#555" stroke-width="1" />
<text x="749.6" y="235" font-family="Liberation Sans" font-size="10.5" fill="#5a5a5a" font-weight="normal" font-style="normal" text-anchor="middle" >15</text>
<line x1="738.5" y1="228" x2="738.5" y2="234" stroke="#555" stroke-width="1" />
<text x="772.9" y="235" font-family="Liberation Sans" font-size="10.5" fill="#5a5a5a" font-weight="normal" font-style="normal" text-anchor="middle" >16</text>
<line x1="761.8" y1="228" x2="761.8" y2="234" stroke="#555" stroke-width="1" />
<text x="796.3" y="235" font-family="Liberation Sans" font-size="10.5" fill="#5a5a5a" font-weight="normal" font-style="normal" text-anchor="middle" >17</text>
<line x1="785.1" y1="228" x2="785.1" y2="234" stroke="#555" stroke-width="1" />
<text x="819.6" y="235" font-family="Liberation Sans" font-size="10.5" fill="#5a5a5a" font-weight="normal" font-style="normal" text-anchor="middle" >18</text>
<line x1="808.4" y1="228" x2="808.4" y2="234" stroke="#555" stroke-width="1" />
<text x="842.9" y="235" font-family="Liberation Sans" font-size="10.5" fill="#5a5a5a" font-weight="normal" font-style="normal" text-anchor="middle" >19</text>
<line x1="831.7" y1="228" x2="831.7" y2="234" stroke="#555" stroke-width="1" />
<text x="866.2" y="235" font-family="Liberation Sans" font-size="10.5" fill="#5a5a5a" font-weight="normal" font-style="normal" text-anchor="middle" >20</text>
<line x1="855.1" y1="228" x2="855.1" y2="234" stroke="#555" stroke-width="1" />
<text x="889.5" y="235" font-family="Liberation Sans" font-size="10.5" fill="#5a5a5a" font-weight="normal" font-style="normal" text-anchor="middle" >21</text>
<line x1="878.4" y1="228" x2="878.4" y2="234" stroke="#555" stroke-width="1" />
<text x="912.9" y="235" font-family="Liberation Sans" font-size="10.5" fill="#5a5a5a" font-weight="normal" font-style="normal" text-anchor="middle" >22</text>
<line x1="901.7" y1="228" x2="901.7" y2="234" stroke="#555" stroke-width="1" />
<text x="936.2" y="235" font-family="Liberation Sans" font-size="10.5" fill="#5a5a5a" font-weight="normal" font-style="normal" text-anchor="middle" >23</text>
<line x1="925.0" y1="228" x2="925.0" y2="234" stroke="#555" stroke-width="1" />
<text x="959.5" y="235" font-family="Liberation Sans" font-size="10.5" fill="#5a5a5a" font-weight="normal" font-style="normal" text-anchor="middle" >24</text>
<line x1="948.3" y1="228" x2="948.3" y2="234" stroke="#555" stroke-width="1" />
<text x="982.8" y="235" font-family="Liberation Sans" font-size="10.5" fill="#5a5a5a" font-weight="normal" font-style="normal" text-anchor="middle" >25</text>
<line x1="971.7" y1="228" x2="971.7" y2="234" stroke="#555" stroke-width="1" />
<text x="1006.1" y="235" font-family="Liberation Sans" font-size="10.5" fill="#5a5a5a" font-weight="normal" font-style="normal" text-anchor="middle" >26</text>
<line x1="995.0" y1="228" x2="995.0" y2="234" stroke="#555" stroke-width="1" />
<text x="1029.5" y="235" font-family="Liberation Sans" font-size="10.5" fill="#5a5a5a" font-weight="normal" font-style="normal" text-anchor="middle" >27</text>
<line x1="1018.3" y1="228" x2="1018.3" y2="234" stroke="#555" stroke-width="1" />
<text x="1052.8" y="235" font-family="Liberation Sans" font-size="10.5" fill="#5a5a5a" font-weight="normal" font-style="normal" text-anchor="middle" >28</text>
<line x1="1041.6" y1="228" x2="1041.6" y2="234" stroke="#555" stroke-width="1" />
<line x1="401.1" y1="240" x2="401.1" y2="243" stroke="#777" stroke-width="1" />
<line x1="460.2" y1="240" x2="460.2" y2="243" stroke="#777" stroke-width="1" />
<line x1="519.3" y1="240" x2="519.3" y2="243" stroke="#777" stroke-width="1" />
<line x1="578.4" y1="240" x2="578.4" y2="243" stroke="#777" stroke-width="1" />
<line x1="637.5" y1="240" x2="637.5" y2="243" stroke="#777" stroke-width="1" />
<line x1="696.6" y1="240" x2="696.6" y2="243" stroke="#777" stroke-width="1" />
<line x1="755.7" y1="240" x2="755.7" y2="243" stroke="#777" stroke-width="1" />
<line x1="814.8" y1="240" x2="814.8" y2="243" stroke="#777" stroke-width="1" />
<line x1="873.9" y1="240" x2="873.9" y2="243" stroke="#777" stroke-width="1" />
<line x1="933.0" y1="240" x2="933.0" y2="243" stroke="#777" stroke-width="1" />
<line x1="992.1" y1="240" x2="992.1" y2="243" stroke="#777" stroke-width="1" />
<line x1="1051.2" y1="240" x2="1051.2" y2="243" stroke="#777" stroke-width="1" />
<path d="M1055.5,239.5 L1055.5,234.5 L1059.5,230.5 L1063.5,234.5 L1063.5,239.5 Z" fill="#fff" stroke="#666" stroke-width="1" />
<rect x="248" y="407" width="16" height="93" fill="#fff" />
<line x1="252.5" y1="419" x2="259.5" y2="419" stroke="#333" stroke-width="1" />
<line x1="252.5" y1="442.5" x2="259.5" y2="442.5" stroke="#333" stroke-width="1" />
<line x1="252.5" y1="465.5" x2="259.5" y2="465.5" stroke="#333" stroke-width="1" />
<line x1="252.5" y1="488" x2="259.5" y2="488" stroke="#333" stroke-width="1" />
<text x="256" y="434.5" font-family="Liberation Sans" font-size="10.5" fill="#5a5a5a" font-weight="normal" font-style="normal" text-anchor="middle" >1</text>
<text x="256" y="458" font-family="Liberation Sans" font-size="10.5" fill="#5a5a5a" font-weight="normal" font-style="normal" text-anchor="middle" >2</text>
<text x="256" y="481" font-family="Liberation Sans" font-size="10.5" fill="#5a5a5a" font-weight="normal" font-style="normal" text-anchor="middle" >3</text>
<rect x="334.5" y="266.5" width="790" height="445" fill="#fff" stroke="#bdbdbd" stroke-width="1" />
<rect x="394.5" y="405.5" width="670" height="95" fill="none" stroke="#aaaaaa" stroke-width="1" />
<line x1="729.5" y1="366" x2="729.5" y2="405" stroke="#aaaaaa" stroke-width="1" />
<line x1="729.5" y1="500" x2="729.5" y2="541" stroke="#aaaaaa" stroke-width="1" />
<path d="M736.3,355.5 A7,7 0 1 0 733.3,363.6" fill="none" stroke="#aaa" stroke-width="1.3" />
<path d="M732.5,356 L739.5,356 L736,360 Z" fill="#aaa" />
<circle cx="394.5" cy="405.5" r="5" fill="#fff" stroke="#aaa" stroke-width="1"/>
<circle cx="729.5" cy="405.5" r="5" fill="#fff" stroke="#aaa" stroke-width="1"/>
<circle cx="1064.5" cy="405.5" r="5" fill="#fff" stroke="#aaa" stroke-width="1"/>
<circle cx="394.5" cy="452.5" r="5" fill="#fff" stroke="#aaa" stroke-width="1"/>
<circle cx="1064.5" cy="452.5" r="5" fill="#fff" stroke="#aaa" stroke-width="1"/>
<circle cx="394.5" cy="500.5" r="5" fill="#fff" stroke="#aaa" stroke-width="1"/>
<circle cx="729.5" cy="500.5" r="5" fill="#fff" stroke="#aaa" stroke-width="1"/>
<circle cx="1064.5" cy="500.5" r="5" fill="#fff" stroke="#aaa" stroke-width="1"/>
<text x="571.2" y="443.8" font-family="Liberation Sans" font-size="35.8" fill="#0a0a0a" font-weight="normal" font-style="normal" text-anchor="start" textLength="108.36" lengthAdjust="spacingAndGlyphs" >FiraGo:</text>
<text x="692.2" y="443.8" font-family="Liberation Sans" font-size="35.8" fill="#0a0a0a" font-weight="normal" font-style="normal" text-anchor="start" textLength="85.46" lengthAdjust="spacingAndGlyphs" >Hello</text>
<text x="788.92" y="443.8" font-family="Liberation Sans" font-size="35.8" fill="#0a0a0a" font-weight="normal" font-style="normal" text-anchor="start" textLength="95.60" lengthAdjust="spacingAndGlyphs" >World</text>
<text x="577.83" y="486.6" font-family="Liberation Sans" font-size="31" fill="#0a0a0a" font-weight="normal" font-style="normal" text-anchor="start" textLength="103.94" lengthAdjust="spacingAndGlyphs" >Calibri:</text>
<text x="704.35" y="486.6" font-family="Liberation Sans" font-size="31" fill="#0a0a0a" font-weight="normal" font-style="normal" text-anchor="start" textLength="75.54" lengthAdjust="spacingAndGlyphs" >Hello</text>
<text x="790.42" y="486.6" font-family="Liberation Sans" font-size="31" fill="#0a0a0a" font-weight="normal" font-style="normal" text-anchor="start" textLength="91.39" lengthAdjust="spacingAndGlyphs" >World</text>
<path d="M573,446.8 L575,445.8 L577,447.8 L579,445.8 L581,447.8 L583,445.8 L585,447.8 L587,445.8 L589,447.8 L591,445.8 L593,447.8 L595,445.8 L597,447.8 L599,445.8 L601,447.8 L603,445.8 L605,447.8 L607,445.8 L609,447.8 L611,445.8 L613,447.8 L615,445.8 L617,447.8 L619,445.8 L621,447.8 L623,445.8 L625,447.8 L627,445.8 L629,447.8 L631,445.8 L633,447.8 L635,445.8 L637,447.8 L639,445.8 L641,447.8 L643,445.8 L645,447.8 L647,445.8 L649,447.8 L651,445.8 L653,447.8 L655,445.8 L657,447.8 L659,445.8 L661,447.8 L663,445.8 L665,447.8 L667,445.8 L669,447.8 L671,445.8" fill="none" stroke="#e82020" stroke-width="0.85" />
<path d="M788,446.8 L790,445.8 L792,447.8 L794,445.8 L796,447.8 L798,445.8 L800,447.8 L802,445.8 L804,447.8 L806,445.8 L808,447.8 L810,445.8 L812,447.8 L814,445.8 L816,447.8 L818,445.8 L820,447.8 L822,445.8 L824,447.8 L826,445.8 L828,447.8 L830,445.8 L832,447.8 L834,445.8 L836,447.8 L838,445.8 L840,447.8 L842,445.8 L844,447.8 L846,445.8 L848,447.8 L850,445.8 L852,447.8 L854,445.8 L856,447.8 L858,445.8 L860,447.8 L862,445.8 L864,447.8 L866,445.8 L868,447.8 L870,445.8 L872,447.8 L874,445.8 L876,447.8 L878,445.8 L880,447.8 L882,445.8 L884,447.8 L886,445.8" fill="none" stroke="#e82020" stroke-width="0.85" />
<path d="M578,489.5 L580,488.5 L582,490.5 L584,488.5 L586,490.5 L588,488.5 L590,490.5 L592,488.5 L594,490.5 L596,488.5 L598,490.5 L600,488.5 L602,490.5 L604,488.5 L606,490.5 L608,488.5 L610,490.5 L612,488.5 L614,490.5 L616,488.5 L618,490.5 L620,488.5 L622,490.5 L624,488.5 L626,490.5 L628,488.5 L630,490.5 L632,488.5 L634,490.5 L636,488.5 L638,490.5 L640,488.5 L642,490.5 L644,488.5 L646,490.5 L648,488.5 L650,490.5 L652,488.5 L654,490.5 L656,488.5 L658,490.5 L660,488.5 L662,490.5 L664,488.5 L666,490.5 L668,488.5 L670,490.5 L672,488.5 L674,490.5 L676,488.5" fill="none" stroke="#e82020" stroke-width="0.85" />
<path d="M788,489.5 L790,488.5 L792,490.5 L794,488.5 L796,490.5 L798,488.5 L800,490.5 L802,488.5 L804,490.5 L806,488.5 L808,490.5 L810,488.5 L812,490.5 L814,488.5 L816,490.5 L818,488.5 L820,490.5 L822,488.5 L824,490.5 L826,488.5 L828,490.5 L830,488.5 L832,490.5 L834,488.5 L836,490.5 L838,488.5 L840,490.5 L842,488.5 L844,490.5 L846,488.5 L848,490.5 L850,488.5 L852,490.5 L854,488.5 L856,490.5 L858,488.5 L860,490.5 L862,488.5 L864,490.5 L866,488.5 L868,490.5 L870,488.5 L872,490.5 L874,488.5 L876,490.5 L878,488.5 L880,490.5" fill="none" stroke="#e82020" stroke-width="0.85" />
<line x1="453" y1="518.5" x2="1006" y2="518.5" stroke="#000" stroke-width="1" stroke-dasharray="4,4"/>
<line x1="453" y1="631.5" x2="1006" y2="631.5" stroke="#000" stroke-width="1" stroke-dasharray="4,4" stroke-dashoffset="2"/>
<line x1="453.5" y1="518" x2="453.5" y2="632" stroke="#000" stroke-width="1" stroke-dasharray="4,4"/>
<line x1="1005.5" y1="518" x2="1005.5" y2="632" stroke="#000" stroke-width="1" stroke-dasharray="4,4"/>
<text x="548.58" y="546" font-family="Liberation Sans" font-size="22.8" fill="#0a0a0a" font-weight="normal" font-style="normal" text-anchor="start" textLength="358.20" lengthAdjust="spacingAndGlyphs" >Cliquez pour ajouter un sous-titre</text>
<path d="M729.5,542 L729.5,555 M723,548.5 L736,548.5" fill="none" stroke="#999" stroke-width="1" />
<path d="M727.5,544 L729.5,541.5 L731.5,544 M727.5,553 L729.5,555.5 L731.5,553 M725,546.5 L722.5,548.5 L725,550.5 M734,546.5 L736.5,548.5 L734,550.5" fill="none" stroke="#999" stroke-width="1" />
<rect x="1189" y="216" width="16" height="518" fill="#efefef" />
<line x1="1205.5" y1="216" x2="1205.5" y2="855" stroke="#d0d0d0" stroke-width="1" />
<path d="M1193.5,225.5 L1201.5,225.5 L1197.5,221.5 Z" fill="#a0a0a0" />
<path d="M1193.5,658.5 L1201.5,658.5 L1197.5,662.5 Z" fill="#a0a0a0" />
<line x1="1189" y1="669.5" x2="1205" y2="669.5" stroke="#d6d6d6" stroke-width="1" />
<line x1="1189" y1="685.5" x2="1205" y2="685.5" stroke="#d6d6d6" stroke-width="1" />
<line x1="1189" y1="701.5" x2="1205" y2="701.5" stroke="#d6d6d6" stroke-width="1" />
<line x1="1189" y1="717.5" x2="1205" y2="717.5" stroke="#d6d6d6" stroke-width="1" />
<line x1="1189" y1="733.5" x2="1205" y2="733.5" stroke="#d6d6d6" stroke-width="1" />
<line x1="1189" y1="749.5" x2="1205" y2="749.5" stroke="#d6d6d6" stroke-width="1" />
<line x1="1189.5" y1="669" x2="1189.5" y2="750" stroke="#d6d6d6" stroke-width="1" />
<line x1="1193.5" y1="674.5" x2="1201.5" y2="674.5" stroke="#999" stroke-width="1.2" />
<path d="M1193.5,680.5 L1201.5,680.5 L1197.5,676.5 Z" fill="#999" />
<path d="M1193.5,694.0 L1201.5,694.0 L1197.5,690.0 Z" fill="#999" />
<line x1="1193.5" y1="695.5" x2="1201.5" y2="695.5" stroke="#999" stroke-width="1.2" />
<rect x="1191.5" y="709.5" width="7" height="5" fill="none" stroke="#999" stroke-width="1.1" />
<rect x="1194.5" y="706.5" width="7" height="5" fill="#efefef" stroke="#999" stroke-width="1.1" />
<line x1="1193.5" y1="721.5" x2="1201.5" y2="721.5" stroke="#999" stroke-width="1.2" />
<path d="M1193.5,723.5 L1201.5,723.5 L1197.5,727.5 Z" fill="#999" />
<path d="M1193.5,737.5 L1201.5,737.5 L1197.5,741.5 Z" fill="#999" />
<line x1="1193.5" y1="743.5" x2="1201.5" y2="743.5" stroke="#999" stroke-width="1.2" />
<rect x="241" y="734" width="948" height="16" fill="#efefef" />
<path d="M251.0,738.0 L251.0,746.0 L247.0,742 Z" fill="#a0a0a0" />
<path d="M1179.0,738.0 L1179.0,746.0 L1183.0,742 Z" fill="#a0a0a0" />
<line x1="241" y1="750.5" x2="1189" y2="750.5" stroke="#c8c8c8" stroke-width="1" />
<rect x="241" y="751" width="964" height="8" fill="#efefef" />
<rect x="704.5" y="752.5" width="37" height="5" fill="#f5f5f5" stroke="#999" stroke-width="1" rx="2.5" />
<path d="M720.0,753.5 L726.0,753.5 L723,756.5 Z" fill="#888" />
<rect x="241" y="759" width="948" height="80" fill="#fff" />
<text x="250.6" y="778.6" font-family="Liberation Sans" font-size="16" fill="#111" font-weight="normal" font-style="normal" text-anchor="start" textLength="127.24" lengthAdjust="spacingAndGlyphs" >Click to add notes</text>
<rect x="1189" y="759" width="16" height="80" fill="#efefef" />
<path d="M1193.5,767.0 L1201.5,767.0 L1197.5,763.0 Z" fill="#a0a0a0" />
<path d="M1193.5,828.0 L1201.5,828.0 L1197.5,832.0 Z" fill="#a0a0a0" />
<rect x="241" y="839" width="964" height="16" fill="#efefef" />
<path d="M251.0,843.0 L251.0,851.0 L247.0,847 Z" fill="#a0a0a0" />
<path d="M1179.0,843.0 L1179.0,851.0 L1183.0,847 Z" fill="#a0a0a0" />
<rect x="1206" y="216" width="254" height="639" fill="#efefef" />
<rect x="1217.5" y="219.5" width="23" height="23" fill="#f8efe6" stroke="#f2c08c" stroke-width="1" rx="3" />
<rect x="1220.5" y="224.5" width="17" height="13" fill="#fafafa" stroke="#777" stroke-width="1" rx="1" />
<rect x="1223" y="227" width="12" height="2.5" fill="#bbb" />
<rect x="1223" y="230.5" width="5.5" height="5" fill="#bbb" />
<rect x="1229.5" y="230.5" width="5.5" height="5" fill="#bbb" />
<rect x="1245.5" y="224.5" width="17" height="13" fill="#fafafa" stroke="#777" stroke-width="1" rx="1" />
<line x1="1248" y1="227.5" x2="1256" y2="227.5" stroke="#999" stroke-width="1" />
<line x1="1248" y1="230.5" x2="1256" y2="230.5" stroke="#999" stroke-width="1" />
<line x1="1248" y1="233.5" x2="1256" y2="233.5" stroke="#999" stroke-width="1" />
<path d="M1254,238 L1261,231" fill="none" stroke="#5b8ee0" stroke-width="2.5" />
<rect x="1270.5" y="224.5" width="17" height="13" fill="#fafafa" stroke="#777" stroke-width="1" rx="1" />
<line x1="1273" y1="227.5" x2="1281" y2="227.5" stroke="#999" stroke-width="1" />
<line x1="1273" y1="230.5" x2="1281" y2="230.5" stroke="#999" stroke-width="1" />
<rect x="1278.0" y="232" width="1.6" height="8" fill="#e03030" />
<rect x="1279.5" y="232" width="1.6" height="8" fill="#f0a020" />
<rect x="1281.0" y="232" width="1.6" height="8" fill="#e0e020" />
<rect x="1282.5" y="232" width="1.6" height="8" fill="#30b030" />
<rect x="1284.0" y="232" width="1.6" height="8" fill="#3070e0" />
<rect x="1285.5" y="232" width="1.6" height="8" fill="#9040c0" />
<rect x="1295.5" y="224.5" width="17" height="13" fill="#f3f6fb" stroke="#777" stroke-width="1" rx="1" />
<rect x="1298" y="227" width="12" height="2" fill="#9ab8e8" />
<rect x="1298" y="230.5" width="6" height="1.5" fill="#9ab8e8" />
<rect x="1298" y="233" width="6" height="1.5" fill="#9ab8e8" />
<rect x="1305" y="230.5" width="5" height="5" fill="#cfdcf0" />
<rect x="1320.5" y="224.5" width="17" height="13" fill="#fff" stroke="#666" stroke-width="1" />
<line x1="1328.5" y1="224" x2="1328.5" y2="238" stroke="#666" stroke-width="1" />
<path d="M1322,231 L1327,231 M1325,229 L1327,231 L1325,233" fill="none" stroke="#3d7cb5" stroke-width="1.3" />
<polygon points="1354.5,224.5 1356.5,229.3 1361.6,229.7 1357.7,233.0 1358.9,238.1 1354.5,235.4 1350.1,238.1 1351.3,233.0 1347.4,229.7 1352.5,229.3" fill="#6fa0e8" stroke="#3d7cb5" stroke-width="0.8"/>
<path d="M1347.5,223 L1347.5,229 M1344.5,226 L1350.5,226" fill="none" stroke="#f0b400" stroke-width="2" />
<polygon points="1378.5,224.5 1380.5,229.3 1385.6,229.7 1381.7,233.0 1382.9,238.1 1378.5,235.4 1374.1,238.1 1375.3,233.0 1371.4,229.7 1376.5,229.3" fill="#fbd56b" stroke="#e5a000" stroke-width="0.8"/>
<path d="M1447.0,229.0 L1455.0,229.0 L1451,233.0 Z" fill="#222" />
<line x1="1217" y1="251.5" x2="1455" y2="251.5" stroke="#d8d8d8" stroke-width="1" />
<text x="1217.51" y="274.7" font-family="Liberation Sans" font-size="13" fill="#111" font-weight="bold" font-style="normal" text-anchor="start" textLength="184.33" lengthAdjust="spacingAndGlyphs" >Disposition de la diapositive</text>
<rect x="1217.5" y="282.5" width="239" height="542" fill="#fff" stroke="#d0d0d0" stroke-width="1" />
<rect x="1441" y="283" width="15" height="541" fill="#efefef" />
<path d="M1444.0,292.0 L1452.0,292.0 L1448,288.0 Z" fill="#999" />
<path d="M1444.0,816.0 L1452.0,816.0 L1448,820.0 Z" fill="#999" />
<rect x="1444" y="297.5" width="8.5" height="237.5" fill="#9b9b9b" rx="4.25" />
<clipPath id="lc"><rect x="1218" y="283" width="223" height="541"/></clipPath>
<g clip-path="url(#lc)">
<rect x="1277.5" y="292.5" width="105" height="92" fill="#fff" stroke="#d8893a" stroke-width="3" />
<rect x="1286.5" y="321.5" width="86" height="19" fill="none" stroke="#7a7a7a" stroke-width="1" />
<rect x="1291" y="329" width="77" height="5" fill="#808080" />
<rect x="1294.5" y="343.5" width="70" height="23" fill="none" stroke="#7a7a7a" stroke-width="1" />
<rect x="1300" y="353" width="59" height="4" fill="#c0c0c0" />
<rect x="1278.5" y="398.5" width="103" height="90" fill="none" stroke="#7a7a7a" stroke-width="1" />
<rect x="1284.5" y="402.5" width="90" height="15" fill="none" stroke="#7a7a7a" stroke-width="1" />
<rect x="1289" y="408" width="81" height="4" fill="#808080" />
<rect x="1284.5" y="419.5" width="90" height="58" fill="none" stroke="#7a7a7a" stroke-width="1" />
<rect x="1287" y="422" width="2" height="2" fill="#555" />
<rect x="1291" y="422.5" width="79" height="1.3" fill="#bdbdbd" />
<rect x="1291" y="427.5" width="76" height="1.3" fill="#bdbdbd" />
<rect x="1287" y="432" width="2" height="2" fill="#555" />
<rect x="1291" y="432.5" width="79" height="1.3" fill="#bdbdbd" />
<rect x="1291" y="437.5" width="76" height="1.3" fill="#bdbdbd" />
<rect x="1278.5" y="503.5" width="103" height="90" fill="none" stroke="#7a7a7a" stroke-width="1" />
<rect x="1286.5" y="541.5" width="86" height="37" fill="none" stroke="#7a7a7a" stroke-width="1" />
<line x1="1286" y1="560.5" x2="1373" y2="560.5" stroke="#7a7a7a" stroke-width="1" />
<rect x="1289" y="544.5" width="79" height="1.5" fill="#bdbdbd" />
<rect x="1291" y="567" width="77" height="5" fill="#808080" />
<rect x="1278.5" y="608.5" width="103" height="90" fill="none" stroke="#7a7a7a" stroke-width="1" />
<rect x="1284.5" y="612.5" width="90" height="15" fill="none" stroke="#7a7a7a" stroke-width="1" />
<rect x="1289" y="618" width="81" height="4" fill="#808080" />
<rect x="1284.5" y="629.5" width="44" height="58" fill="none" stroke="#7a7a7a" stroke-width="1" />
<rect x="1330.5" y="629.5" width="44" height="58" fill="none" stroke="#7a7a7a" stroke-width="1" />
<rect x="1287" y="632" width="2" height="2" fill="#555" />
<rect x="1291" y="632.5" width="33" height="1.3" fill="#bdbdbd" />
<rect x="1291" y="637.5" width="30" height="1.3" fill="#bdbdbd" />
<rect x="1287" y="642" width="2" height="2" fill="#555" />
<rect x="1291" y="642.5" width="33" height="1.3" fill="#bdbdbd" />
<rect x="1291" y="647.5" width="30" height="1.3" fill="#bdbdbd" />
<rect x="1333" y="632" width="2" height="2" fill="#555" />
<rect x="1337" y="632.5" width="33" height="1.3" fill="#bdbdbd" />
<rect x="1337" y="637.5" width="30" height="1.3" fill="#bdbdbd" />
<rect x="1333" y="642" width="2" height="2" fill="#555" />
<rect x="1337" y="642.5" width="33" height="1.3" fill="#bdbdbd" />
<rect x="1337" y="647.5" width="30" height="1.3" fill="#bdbdbd" />
<rect x="1278.5" y="713.5" width="103" height="90" fill="none" stroke="#7a7a7a" stroke-width="1" />
<rect x="1284.5" y="717.5" width="90" height="15" fill="none" stroke="#7a7a7a" stroke-width="1" />
<rect x="1289" y="723" width="81" height="4" fill="#808080" />
<rect x="1284.5" y="733.5" width="44" height="59" fill="none" stroke="#7a7a7a" stroke-width="1" />
<rect x="1330.5" y="733.5" width="44" height="59" fill="none" stroke="#7a7a7a" stroke-width="1" />
<line x1="1284" y1="741.5" x2="1329" y2="741.5" stroke="#7a7a7a" stroke-width="1" />
<line x1="1330" y1="741.5" x2="1375" y2="741.5" stroke="#7a7a7a" stroke-width="1" />
<rect x="1287" y="736.5" width="37" height="1.5" fill="#bdbdbd" />
<rect x="1287" y="744.5" width="37" height="1.5" fill="#bdbdbd" />
<rect x="1333" y="736.5" width="37" height="1.5" fill="#bdbdbd" />
<rect x="1333" y="744.5" width="37" height="1.5" fill="#bdbdbd" />
<rect x="1278.5" y="818.5" width="103" height="90" fill="none" stroke="#7a7a7a" stroke-width="1" />
<rect x="1284.5" y="822.5" width="90" height="15" fill="none" stroke="#7a7a7a" stroke-width="1" />
</g>
<text x="1217.17" y="845.8" font-family="Liberation Sans" font-size="13" fill="#2b2b2b" font-weight="normal" font-style="normal" text-anchor="start" textLength="97.42" lengthAdjust="spacingAndGlyphs" >Diapositive-titre</text>
<rect x="20" y="855" width="1440" height="27" fill="#efefef" />
<line x1="20" y1="854.5" x2="1460" y2="854.5" stroke="#c4c4c4" stroke-width="1" />
<text x="28.41" y="872.5" font-family="Liberation Sans" font-size="13" fill="#2b2b2b" font-weight="normal" font-style="normal" text-anchor="start" textLength="175.40" lengthAdjust="spacingAndGlyphs" >Sélectionner la police (Ctrl+D)</text>
<line x1="728.5" y1="859" x2="728.5" y2="877" stroke="#c9c9c9" stroke-width="1" />
<line x1="849.5" y1="859" x2="849.5" y2="877" stroke="#c9c9c9" stroke-width="1" />
<line x1="1039.5" y1="859" x2="1039.5" y2="877" stroke="#c9c9c9" stroke-width="1" />
<text x="733.23" y="872.5" font-family="Liberation Sans" font-size="13" fill="#2b2b2b" font-weight="normal" font-style="normal" text-anchor="start" textLength="109.89" lengthAdjust="spacingAndGlyphs" >Diapositive 1 sur 1</text>
<text x="853.9" y="872.5" font-family="Liberation Sans" font-size="13" fill="#2b2b2b" font-weight="normal" font-style="normal" text-anchor="start" textLength="74.75" lengthAdjust="spacingAndGlyphs" >Diapositive1</text>
<text x="1053.66" y="872.5" font-family="Liberation Sans" font-size="13" fill="#2b2b2b" font-weight="normal" font-style="normal" text-anchor="start" textLength="19.84" lengthAdjust="spacingAndGlyphs" >Ins</text>
<rect x="1091.5" y="856.5" width="23" height="23" fill="#f8efe6" stroke="#f2c08c" stroke-width="1" rx="3" />
<rect x="1094.5" y="861.5" width="17" height="13" fill="#fff" stroke="#6a6a6a" stroke-width="1.2" rx="1.5" />
<rect x="1097" y="863.2" width="12" height="1.8" fill="#c8c8c8" />
<line x1="1097" y1="866.5" x2="1103" y2="866.5" stroke="#888" stroke-width="0.9" />
<line x1="1097" y1="868.5" x2="1103" y2="868.5" stroke="#888" stroke-width="0.9" />
<line x1="1097" y1="870.5" x2="1103" y2="870.5" stroke="#888" stroke-width="0.9" />
<line x1="1097" y1="872.5" x2="1103" y2="872.5" stroke="#888" stroke-width="0.9" />
<rect x="1104.5" y="866" width="4.5" height="7" fill="#cfcfcf" />
<rect x="1120.5" y="860.7" width="6" height="6" fill="#fff" stroke="#6a6a6a" stroke-width="1.1" rx="1.2" />
<line x1="1122.2" y1="862.8000000000001" x2="1124.8" y2="862.8000000000001" stroke="#888" stroke-width="0.7" />
<line x1="1122.2" y1="864.6" x2="1124.8" y2="864.6" stroke="#888" stroke-width="0.7" />
<rect x="1129.7" y="860.7" width="6" height="6" fill="#fff" stroke="#6a6a6a" stroke-width="1.1" rx="1.2" />
<line x1="1131.4" y1="862.8000000000001" x2="1134.0" y2="862.8000000000001" stroke="#888" stroke-width="0.7" />
<line x1="1131.4" y1="864.6" x2="1134.0" y2="864.6" stroke="#888" stroke-width="0.7" />
<rect x="1120.5" y="869.7" width="6" height="6" fill="#fff" stroke="#6a6a6a" stroke-width="1.1" rx="1.2" />
<line x1="1122.2" y1="871.8000000000001" x2="1124.8" y2="871.8000000000001" stroke="#888" stroke-width="0.7" />
<line x1="1122.2" y1="873.6" x2="1124.8" y2="873.6" stroke="#888" stroke-width="0.7" />
<rect x="1129.7" y="869.7" width="6" height="6" fill="#fff" stroke="#6a6a6a" stroke-width="1.1" rx="1.2" />
<line x1="1131.4" y1="871.8000000000001" x2="1134.0" y2="871.8000000000001" stroke="#888" stroke-width="0.7" />
<line x1="1131.4" y1="873.6" x2="1134.0" y2="873.6" stroke="#888" stroke-width="0.7" />
<line x1="1144" y1="861.4" x2="1148.5" y2="861.4" stroke="#aaa" stroke-width="0.9" />
<line x1="1144" y1="863.3" x2="1147" y2="863.3" stroke="#aaa" stroke-width="0.9" />
<line x1="1144" y1="865.3" x2="1147" y2="865.3" stroke="#aaa" stroke-width="0.9" />
<line x1="1144" y1="869.4" x2="1148.5" y2="869.4" stroke="#aaa" stroke-width="0.9" />
<line x1="1144" y1="871.4" x2="1147" y2="871.4" stroke="#aaa" stroke-width="0.9" />
<line x1="1144" y1="873.4" x2="1147" y2="873.4" stroke="#aaa" stroke-width="0.9" />
<rect x="1151.5" y="861.5" width="10.5" height="9" fill="#fff" stroke="#6a6a6a" stroke-width="1.1" rx="1.2" />
<rect x="1153.5" y="863.2" width="6.5" height="1.6" fill="#c8c8c8" />
<line x1="1153.5" y1="866.5" x2="1157" y2="866.5" stroke="#999" stroke-width="0.8" />
<line x1="1153.5" y1="868.5" x2="1156" y2="868.5" stroke="#999" stroke-width="0.8" />
<rect x="1158" y="865.5" width="2" height="3.5" fill="#cfcfcf" />
<rect x="1169.5" y="861.5" width="17" height="13" fill="#fff" stroke="#6a6a6a" stroke-width="1.2" rx="1.5" />
<rect x="1172" y="863.2" width="12" height="1.6" fill="#c8c8c8" />
<line x1="1172" y1="866.5" x2="1175" y2="866.5" stroke="#999" stroke-width="0.8" />
<line x1="1172" y1="868.5" x2="1175" y2="868.5" stroke="#999" stroke-width="0.8" />
<line x1="1172" y1="870.5" x2="1175" y2="870.5" stroke="#999" stroke-width="0.8" />
<line x1="1172" y1="872.5" x2="1175" y2="872.5" stroke="#999" stroke-width="0.8" />
<path d="M1177,867.5 L1186.5,867.5 L1186.5,872.5 L1183.5,875.5 L1177,875.5 Z" fill="#fde4b6" stroke="#d38b3e" stroke-width="1.1" />
<rect x="1196.2" y="860.2" width="13" height="1.6" fill="#707070" />
<path d="M1197.5,861.5 L1197.5,869.5 L1208,869.5 L1208,861.5" fill="#fff" stroke="#707070" stroke-width="1.1" />
<line x1="1203" y1="870" x2="1203" y2="875" stroke="#707070" stroke-width="1.3" />
<line x1="1198" y1="875.5" x2="1205" y2="875.5" stroke="#707070" stroke-width="1.2" />
<path d="M1205.5,868.5 L1205.5,876 L1211.5,872.2 Z" fill="#fde4b6" stroke="#f0a500" stroke-width="1.1" />
<path d="M1219.0,867.0 L1226.0,867.0 L1222.5,871.0 Z" fill="#333" />
<line x1="1240" y1="867.5" x2="1247" y2="867.5" stroke="#888" stroke-width="1" />
<line x1="1254" y1="866.5" x2="1364" y2="866.5" stroke="#d6d6d6" stroke-width="1" />
<line x1="1308" y1="860" x2="1308" y2="873" stroke="#d0d0d0" stroke-width="1.2" />
<circle cx="1284.7" cy="866.5" r="4.6" fill="#fafafa" stroke="#777" stroke-width="1"/>
<line x1="1370" y1="867.5" x2="1377" y2="867.5" stroke="#888" stroke-width="1" />
<line x1="1373.5" y1="864" x2="1373.5" y2="871" stroke="#888" stroke-width="1" />
<text x="1397.36" y="873" font-family="Liberation Sans" font-size="13" fill="#222" font-weight="normal" font-style="normal" text-anchor="start" textLength="25.61" lengthAdjust="spacingAndGlyphs" >62%</text>
<path d="M1437,860 L1440,862.5 L1437,865 M1440.5,860 L1443.5,862.5 L1440.5,865" fill="none" stroke="#888" stroke-width="1.1" />
<rect x="278.5" y="114.5" width="316" height="307" fill="#fff" stroke="#111" stroke-width="1" />
<rect x="579" y="115" width="14" height="305" fill="#ececec" />
<path d="M582.5,124.5 L590.5,124.5 L586.5,120.5 Z" fill="#8a8a8a" />
<path d="M582.5,412.5 L590.5,412.5 L586.5,416.5 Z" fill="#8a8a8a" />
<circle cx="586.5" cy="209.8" r="4.5" fill="#8f8f8f"/>
<rect x="279" y="187" width="300" height="18" fill="#fec97a" />
<text x="283.32" y="127.2" font-family="Liberation Serif" font-size="13" fill="#b4b4b4" font-weight="bold" font-style="normal" text-anchor="start" textLength="7.54" lengthAdjust="spacingAndGlyphs" >S</text>
<text x="288.6" y="130" font-family="Liberation Serif" font-size="13" fill="#d40f1f" font-weight="bold" font-style="normal" text-anchor="start" textLength="8.11" lengthAdjust="spacingAndGlyphs" >F</text>
<text x="307.55" y="127.5" font-family="Liberation Sans" font-size="11.5" fill="#000" font-weight="bold" font-style="italic" text-anchor="start" textLength="85.08" lengthAdjust="spacingAndGlyphs" stroke="#000" stroke-width="0.6">Falcon Pro Poster</text>
<text x="283.32" y="145.2" font-family="Liberation Serif" font-size="13" fill="#b4b4b4" font-weight="bold" font-style="normal" text-anchor="start" textLength="7.54" lengthAdjust="spacingAndGlyphs" >S</text>
<text x="288.6" y="148" font-family="Liberation Serif" font-size="13" fill="#d40f1f" font-weight="bold" font-style="normal" text-anchor="start" textLength="8.11" lengthAdjust="spacingAndGlyphs" >F</text>
<text x="307.44" y="144.8" font-family="Liberation Serif" font-size="11.5" fill="#111" font-weight="normal" font-style="normal" text-anchor="start" textLength="57.94" lengthAdjust="spacingAndGlyphs" stroke="#111" stroke-width="0.2">Fere Textura Pro</text>
<text x="283.32" y="163.2" font-family="Liberation Serif" font-size="13" fill="#b4b4b4" font-weight="bold" font-style="normal" text-anchor="start" textLength="7.54" lengthAdjust="spacingAndGlyphs" >S</text>
<text x="288.6" y="166" font-family="Liberation Serif" font-size="13" fill="#d40f1f" font-weight="bold" font-style="normal" text-anchor="start" textLength="8.11" lengthAdjust="spacingAndGlyphs" >F</text>
<text x="307.13" y="163.3" font-family="Liberation Sans" font-size="11.5" fill="#000" font-weight="bold" font-style="normal" text-anchor="start" textLength="84.10" lengthAdjust="spacingAndGlyphs" >Fette Engschrift Pro</text>
<text x="283.32" y="181.2" font-family="Liberation Serif" font-size="13" fill="#b4b4b4" font-weight="bold" font-style="normal" text-anchor="start" textLength="7.54" lengthAdjust="spacingAndGlyphs" >S</text>
<text x="288.6" y="184" font-family="Liberation Serif" font-size="13" fill="#d40f1f" font-weight="bold" font-style="normal" text-anchor="start" textLength="8.11" lengthAdjust="spacingAndGlyphs" >F</text>
<text x="306.92" y="180.5" font-family="Liberation Sans" font-size="11.5" fill="#000" font-weight="bold" font-style="normal" text-anchor="start" textLength="123.19" lengthAdjust="spacingAndGlyphs" >Fette Mittelschrift Pro</text>
<text x="283.32" y="199.2" font-family="Liberation Serif" font-size="13" fill="#b4b4b4" font-weight="bold" font-style="normal" text-anchor="start" textLength="7.54" lengthAdjust="spacingAndGlyphs" >S</text>
<text x="288.6" y="202" font-family="Liberation Serif" font-size="13" fill="#d40f1f" font-weight="bold" font-style="normal" text-anchor="start" textLength="8.11" lengthAdjust="spacingAndGlyphs" >F</text>
<text x="306.64" y="199.4" font-family="Liberation Sans" font-size="12.2" fill="#111" font-weight="normal" font-style="normal" text-anchor="start" textLength="43.29" lengthAdjust="spacingAndGlyphs" >FiraGO</text>
<text x="283.32" y="217.2" font-family="Liberation Serif" font-size="13" fill="#b4b4b4" font-weight="bold" font-style="normal" text-anchor="start" textLength="7.54" lengthAdjust="spacingAndGlyphs" >S</text>
<text x="288.6" y="220" font-family="Liberation Serif" font-size="13" fill="#d40f1f" font-weight="bold" font-style="normal" text-anchor="start" textLength="8.11" lengthAdjust="spacingAndGlyphs" >F</text>
<text x="306.61" y="217.4" font-family="Liberation Sans" font-size="12.2" fill="#111" font-weight="normal" font-style="normal" text-anchor="start" textLength="79.29" lengthAdjust="spacingAndGlyphs" >FiraGO Book</text>
<text x="283.32" y="235.2" font-family="Liberation Serif" font-size="13" fill="#b4b4b4" font-weight="bold" font-style="normal" text-anchor="start" textLength="7.54" lengthAdjust="spacingAndGlyphs" >S</text>
<text x="288.6" y="238" font-family="Liberation Serif" font-size="13" fill="#d40f1f" font-weight="bold" font-style="normal" text-anchor="start" textLength="8.11" lengthAdjust="spacingAndGlyphs" >F</text>
<text x="306.67" y="235.5" font-family="Liberation Sans" font-size="12.2" fill="#e2e2e2" font-weight="normal" font-style="normal" text-anchor="start" textLength="75.26" lengthAdjust="spacingAndGlyphs" >FiraGO Eight</text>
<text x="283.32" y="253.2" font-family="Liberation Serif" font-size="13" fill="#b4b4b4" font-weight="bold" font-style="normal" text-anchor="start" textLength="7.54" lengthAdjust="spacingAndGlyphs" >S</text>
<text x="288.6" y="256" font-family="Liberation Serif" font-size="13" fill="#d40f1f" font-weight="bold" font-style="normal" text-anchor="start" textLength="8.11" lengthAdjust="spacingAndGlyphs" >F</text>
<text x="306.84" y="253.4" font-family="Liberation Sans" font-size="12.2" fill="#000" font-weight="bold" font-style="normal" text-anchor="start" textLength="111.23" lengthAdjust="spacingAndGlyphs" stroke="#000" stroke-width="0.25">FiraGO ExtraBold</text>
<text x="283.32" y="271.2" font-family="Liberation Serif" font-size="13" fill="#b4b4b4" font-weight="bold" font-style="normal" text-anchor="start" textLength="7.54" lengthAdjust="spacingAndGlyphs" >S</text>
<text x="288.6" y="274" font-family="Liberation Serif" font-size="13" fill="#d40f1f" font-weight="bold" font-style="normal" text-anchor="start" textLength="8.11" lengthAdjust="spacingAndGlyphs" >F</text>
<text x="306.62" y="271.1" font-family="Liberation Sans" font-size="12.2" fill="#8a8a8a" font-weight="normal" font-style="normal" text-anchor="start" textLength="109.10" lengthAdjust="spacingAndGlyphs" >FiraGO ExtraLight</text>
<text x="283.32" y="289.2" font-family="Liberation Serif" font-size="13" fill="#b4b4b4" font-weight="bold" font-style="normal" text-anchor="start" textLength="7.54" lengthAdjust="spacingAndGlyphs" >S</text>
<text x="288.6" y="292" font-family="Liberation Serif" font-size="13" fill="#d40f1f" font-weight="bold" font-style="normal" text-anchor="start" textLength="8.11" lengthAdjust="spacingAndGlyphs" >F</text>
<text x="306.85" y="288.8" font-family="Liberation Sans" font-size="12.2" fill="#000" font-weight="bold" font-style="normal" text-anchor="start" textLength="86.61" lengthAdjust="spacingAndGlyphs" stroke="#000" stroke-width="0.45">FiraGO Heavy</text>
<text x="283.32" y="307.2" font-family="Liberation Serif" font-size="13" fill="#b4b4b4" font-weight="bold" font-style="normal" text-anchor="start" textLength="7.54" lengthAdjust="spacingAndGlyphs" >S</text>
<text x="288.6" y="310" font-family="Liberation Serif" font-size="13" fill="#d40f1f" font-weight="bold" font-style="normal" text-anchor="start" textLength="8.11" lengthAdjust="spacingAndGlyphs" >F</text>
<text x="306.6" y="307.7" font-family="Liberation Sans" font-size="12.2" fill="#666" font-weight="normal" font-style="normal" text-anchor="start" textLength="78.42" lengthAdjust="spacingAndGlyphs" >FiraGO Light</text>
<text x="283.32" y="325.2" font-family="Liberation Serif" font-size="13" fill="#b4b4b4" font-weight="bold" font-style="normal" text-anchor="start" textLength="7.54" lengthAdjust="spacingAndGlyphs" >S</text>
<text x="288.6" y="328" font-family="Liberation Serif" font-size="13" fill="#d40f1f" font-weight="bold" font-style="normal" text-anchor="start" textLength="8.11" lengthAdjust="spacingAndGlyphs" >F</text>
<text x="306.83" y="325.4" font-family="Liberation Sans" font-size="12.2" fill="#000" font-weight="bold" font-style="normal" text-anchor="start" textLength="99.17" lengthAdjust="spacingAndGlyphs" >FiraGO Medium</text>
<text x="283.32" y="343.2" font-family="Liberation Serif" font-size="13" fill="#b4b4b4" font-weight="bold" font-style="normal" text-anchor="start" textLength="7.54" lengthAdjust="spacingAndGlyphs" >S</text>
<text x="288.6" y="346" font-family="Liberation Serif" font-size="13" fill="#d40f1f" font-weight="bold" font-style="normal" text-anchor="start" textLength="8.11" lengthAdjust="spacingAndGlyphs" >F</text>
<text x="306.85" y="343.5" font-family="Liberation Sans" font-size="12.2" fill="#000" font-weight="bold" font-style="normal" text-anchor="start" textLength="108.80" lengthAdjust="spacingAndGlyphs" >FiraGO SemiBold</text>
<text x="283.32" y="361.2" font-family="Liberation Serif" font-size="13" fill="#b4b4b4" font-weight="bold" font-style="normal" text-anchor="start" textLength="7.54" lengthAdjust="spacingAndGlyphs" >S</text>
<text x="288.6" y="364" font-family="Liberation Serif" font-size="13" fill="#d40f1f" font-weight="bold" font-style="normal" text-anchor="start" textLength="8.11" lengthAdjust="spacingAndGlyphs" >F</text>
<text x="307.47" y="363.2" font-family="Liberation Sans" font-size="12.5" fill="#000" font-weight="bold" font-style="italic" text-anchor="start" textLength="91.63" lengthAdjust="spacingAndGlyphs" stroke="#000" stroke-width="0.9">FLAGSTAFF</text>
<text x="283.32" y="379.2" font-family="Liberation Serif" font-size="13" fill="#b4b4b4" font-weight="bold" font-style="normal" text-anchor="start" textLength="7.54" lengthAdjust="spacingAndGlyphs" >S</text>
<text x="288.6" y="382" font-family="Liberation Serif" font-size="13" fill="#d40f1f" font-weight="bold" font-style="normal" text-anchor="start" textLength="8.11" lengthAdjust="spacingAndGlyphs" >F</text>
<text x="306.77" y="379.7" font-family="Liberation Mono" font-size="11.5" fill="#8a8a8a" font-weight="normal" font-style="normal" text-anchor="start" textLength="68.67" lengthAdjust="spacingAndGlyphs" >flotline</text>
<text x="283.32" y="397.2" font-family="Liberation Serif" font-size="13" fill="#b4b4b4" font-weight="bold" font-style="normal" text-anchor="start" textLength="7.54" lengthAdjust="spacingAndGlyphs" >S</text>
<text x="288.6" y="400" font-family="Liberation Serif" font-size="13" fill="#d40f1f" font-weight="bold" font-style="normal" text-anchor="start" textLength="8.11" lengthAdjust="spacingAndGlyphs" >F</text>
<text x="307.76" y="396.1" font-family="Liberation Serif" font-size="11.5" fill="#222" font-weight="normal" font-style="italic" text-anchor="start" textLength="96.99" lengthAdjust="spacingAndGlyphs" >Florence Script Pro</text>
<text x="283.32" y="415.2" font-family="Liberation Serif" font-size="13" fill="#b4b4b4" font-weight="bold" font-style="normal" text-anchor="start" textLength="7.54" lengthAdjust="spacingAndGlyphs" >S</text>
<text x="288.6" y="418" font-family="Liberation Serif" font-size="13" fill="#d40f1f" font-weight="bold" font-style="normal" text-anchor="start" textLength="8.11" lengthAdjust="spacingAndGlyphs" >F</text>
<text x="306.85" y="416.9" font-family="Liberation Sans" font-size="12" fill="#333" font-weight="normal" font-style="normal" text-anchor="start" textLength="47.40" lengthAdjust="spacingAndGlyphs" >Florentine</text>
<path d="M512.5,197.5 L512.5,214 L516,210.5 L519,217 L521.5,216 L518.8,209.8 L523.5,209.5 Z" fill="#3a3a3a" stroke="#fff" stroke-width="1" />
</svg></body></html>
